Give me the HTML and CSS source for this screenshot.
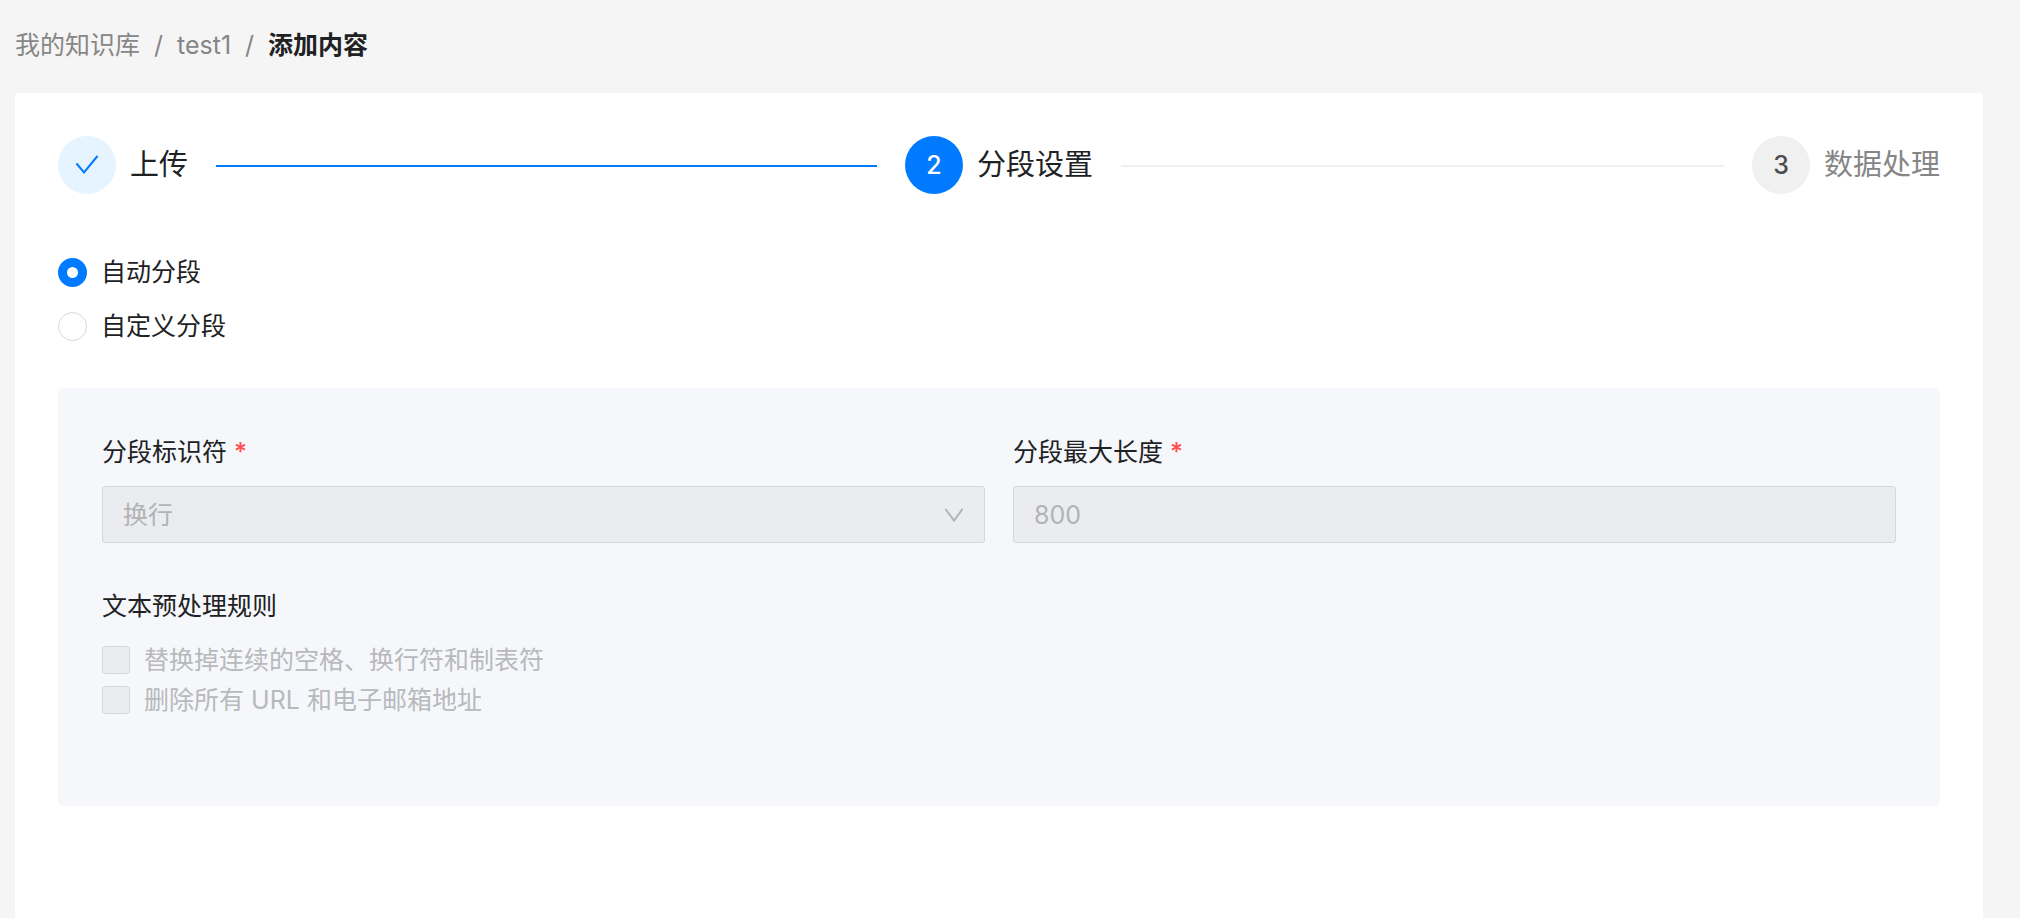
FILE: index.html
```html
<!DOCTYPE html>
<html lang="zh-CN">
<head>
    <meta charset="UTF-8">
    <meta name="viewport" content="width=device-width, initial-scale=1.0">
    <title>添加内容</title>
    <link rel="stylesheet" href="styles.css">
</head>
<body>
    <nav class="breadcrumb">
        <a href="#">我的知识库</a>
        <span>/</span>
        <a href="#">test1</a>
        <span>/</span>
        <strong>添加内容</strong>
    </nav>

    <main class="card">
        <ol class="steps">
            <li class="step done">
                <span class="step-icon">
                    <svg width="24" height="24" viewBox="0 0 24 24" fill="none" stroke="currentColor" stroke-width="2">
                        <path d="M1.5 10.5L9 19.5L22.5 3" />
                    </svg>
                </span>
                <span class="step-title">上传</span>
            </li>
            <li class="step active">
                <span class="step-icon">2</span>
                <span class="step-title">分段设置</span>
            </li>
            <li class="step">
                <span class="step-icon">3</span>
                <span class="step-title">数据处理</span>
            </li>
        </ol>

        <form>
            <div class="modes">
                <label class="option"><input type="radio" name="mode" checked>自动分段</label>
                <label class="option"><input type="radio" name="mode">自定义分段</label>
            </div>

            <div class="panel">
                <div class="fields">
                    <div class="field">
                        <label for="separator">分段标识符 <span class="required">*</span></label>
                        <div class="select-box">
                            <select id="separator" disabled>
                                <option>换行</option>
                            </select>
                            <svg class="arrow" width="20" height="16" viewBox="0 0 20 16" fill="none" stroke="currentColor" stroke-width="2">
                                <path d="M1.5 2L10 13.5L18.5 2" />
                            </svg>
                        </div>
                    </div>
                    <div class="field">
                        <label for="maxLength">分段最大长度 <span class="required">*</span></label>
                        <input type="text" id="maxLength" value="800" disabled>
                    </div>
                </div>

                <fieldset class="rules">
                    <legend>文本预处理规则</legend>
                    <label class="option"><input type="checkbox" disabled>替换掉连续的空格、换行符和制表符</label>
                    <label class="option"><input type="checkbox" disabled>删除所有 URL 和电子邮箱地址</label>
                </fieldset>
            </div>
        </form>
    </main>
</body>
</html>
```
FILE: styles.css
```css
* {
    margin: 0;
    padding: 0;
    box-sizing: border-box;
}

body {
    display: flex;
    flex-direction: column;
    min-height: 100vh;
    padding: 0 37px 0 15px;
    background-color: #f5f5f5;
    color: #202122;
    font-family: Inter, "Noto Sans CJK SC", sans-serif;
    font-size: 25px;
    line-height: 40px;
}

.breadcrumb {
    display: flex;
    gap: 14px;
    padding: 25px 0 28px;
    color: #868686;
}

.breadcrumb a {
    color: inherit;
    text-decoration: none;
}

.breadcrumb strong {
    color: #202122;
    font-weight: 700;
}

.card {
    flex: 1;
    padding: 43px;
    background-color: #fff;
    border-radius: 3px 3px 0 0;
}

.steps {
    display: flex;
    gap: 28px;
    list-style: none;
}

.step {
    display: flex;
    align-items: center;
    color: #868686;
    font-size: 29px;
}

.step:not(:last-child) {
    flex: 1;
}

/* connecting line to the next step */
.step:not(:last-child)::after {
    content: "";
    flex: 1;
    height: 2px;
    margin: 2px 0 0 28px;
    background-color: #f0f0f0;
}

.step.done::after {
    background-color: #007aff;
}

.step-icon {
    display: flex;
    justify-content: center;
    align-items: center;
    width: 58px;
    height: 58px;
    margin-right: 14px;
    border-radius: 50%;
    background-color: #f0f0f0;
    color: #4d4d4d;
    font-size: 25px;
    font-weight: 500;
}

.done,
.active {
    color: #202122;
}

.done .step-icon {
    background-color: #e6f4ff;
    color: #007aff;
}

.active .step-icon {
    background-color: #007aff;
    color: #fff;
}

.modes {
    display: flex;
    flex-direction: column;
    gap: 14px;
    padding: 58px 0 42px;
}

.option {
    display: flex;
    align-items: center;
    align-self: flex-start;
    gap: 14px;
}

.option input {
    appearance: none;
    width: 29px;
    height: 29px;
    border: 1px solid #d9d9d9;
    background-color: #fff;
}

.option input[type="radio"] {
    border-radius: 50%;
}

.option input[type="radio"]:checked {
    border: 9px solid #007aff;
}

.option input[type="checkbox"] {
    width: 28px;
    height: 28px;
    border-radius: 3px;
    border-color: #d6d7d9;
    background-color: #ebecf0;
}

.panel {
    padding: 44px 44px 86px;
    border-radius: 6px;
    background-color: #f5f7fb;
}

.fields {
    display: grid;
    grid-template-columns: 1fr 1fr;
    align-items: start;
    gap: 28px;
}

.field {
    display: flex;
    flex-direction: column;
    gap: 14px;
}

.required {
    color: #ff4d4f;
    font-weight: 500;
}

.field select,
.field input {
    appearance: none;
    display: block;
    width: 100%;
    height: 57px;
    padding: 0 20px;
    border: 1px solid #d6d7d9;
    border-radius: 3px;
    background-color: #ebecf0;
    color: #b2b3b5;
    font: inherit;
    opacity: 1;
}

.select-box {
    position: relative;
}

.arrow {
    position: absolute;
    top: 21px;
    right: 21px;
    color: #b2b3b5;
}

.rules {
    margin-top: 43px;
    border: none;
}

.rules legend {
    margin-bottom: 14px;
}

.rules .option {
    color: #b8b9bb;
}
```
